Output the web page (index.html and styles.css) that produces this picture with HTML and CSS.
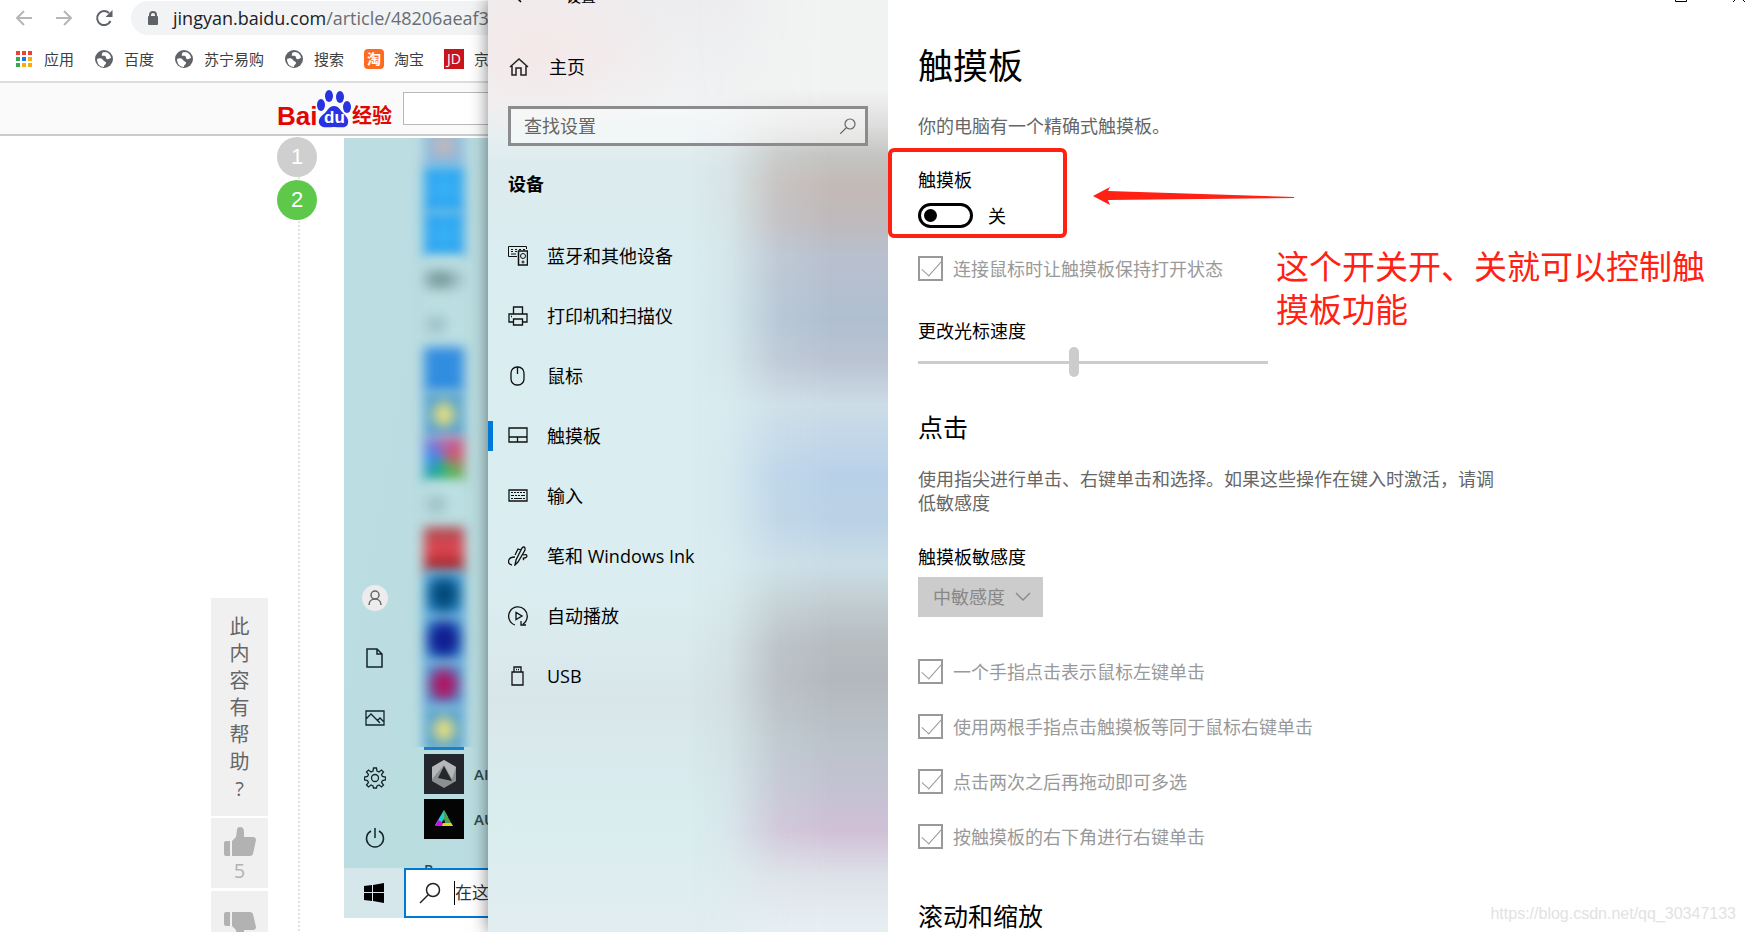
FILE: index.html
```html
<!DOCTYPE html>
<html lang="zh-CN">
<head>
    <meta charset="UTF-8">
    <title>触摸板</title>
    <link rel="stylesheet" href="styles.css">
</head>
<body>
  <div class="desktop">

    <div class="browser">
      <div class="toolbar">
        <button class="tool" aria-label="后退">
          <svg width="18" height="18" viewBox="0 0 18 18" fill="none" stroke="#b4b6b8" stroke-width="2"><path d="M17 9H2M9 2L2 9l7 7"/></svg>
        </button>
        <button class="tool" aria-label="前进">
          <svg width="18" height="18" viewBox="0 0 18 18" fill="none" stroke="#b4b6b8" stroke-width="2"><path d="M1 9h15M9 2l7 7-7 7"/></svg>
        </button>
        <button class="tool" aria-label="刷新">
          <svg width="18" height="18" viewBox="0 0 18 18"><path d="M15.500 12A7 7 0 1 1 14 4" fill="none" stroke="#5f6368" stroke-width="2"/><path d="M17.500 1v7h-7z" fill="#5f6368"/></svg>
        </button>
        <div class="address">
          <svg width="12" height="15" viewBox="0 0 12 15"><path d="M3 6V4a3 3 0 0 1 6 0v2" fill="none" stroke="#5f6368" stroke-width="2"/><rect x="1" y="5" width="10" height="9" rx="1" fill="#5f6368"/></svg>
          <p>jingyan.baidu.com<span>/article/48206aeaf3</span></p>
        </div>
      </div>

      <div class="bookmarks">
        <a href="#">
          <svg width="20" height="20" viewBox="0 0 20 20">
            <path fill="#ea4335" d="M2 2h4v4H2zM8 2h4v4H8zM14 2h4v4h-4z"/>
            <path fill="#34a853" d="M2 8h4v4H2zM2 14h4v4H2z"/>
            <path fill="#1a73e8" d="M8 8h4v4H8z"/>
            <path fill="#fbab09" d="M14 8h4v4h-4zM8 14h4v4H8zM14 14h4v4h-4z"/>
          </svg>应用</a>
        <a href="#"><svg width="20" height="20" viewBox="0 0 20 20"><use href="#globe"/></svg>百度</a>
        <a href="#"><svg width="20" height="20" viewBox="0 0 20 20"><use href="#globe"/></svg>苏宁易购</a>
        <a href="#"><svg width="20" height="20" viewBox="0 0 20 20"><use href="#globe"/></svg>搜索</a>
        <a href="#"><span class="mark taobao">淘</span>淘宝</a>
        <a href="#"><span class="mark jd">JD</span>京</a>
      </div>

      <div class="site-header">
        <a class="logo" href="#">
          <span class="logo-bai">Bai</span>
          <span class="paw">
            <svg width="36" height="38" viewBox="0 0 36 38" fill="#2932e1">
              <ellipse cx="5" cy="15" rx="4" ry="6"/><ellipse cx="13" cy="6" rx="4" ry="6"/>
              <ellipse cx="24" cy="7" rx="4" ry="6"/><ellipse cx="31" cy="17" rx="4" ry="6"/>
              <path d="M18 16c-5 0-6 4-9 7-4 3-7 6-6 10 2 6 9 4 15 4s13 2 14-4c1-4-2-7-5-10-3-3-4-7-9-7z"/>
            </svg>
            <span class="du">du</span>
          </span>
          <span class="logo-cn">经验</span>
        </a>
        <input class="site-search" type="text" aria-label="搜索经验">
      </div>

      <div class="article">
        <div class="helpful">
          <p class="helpful-title">此内容有帮助?</p>
          <button class="vote" aria-label="有帮助">
            <svg width="32" height="30" viewBox="0 0 32 30" fill="#b2b2b2"><path d="M0 16q0-2 2-2h4v15H2q-2 0-2-2zM8 14l4-4 1-7q0-3 3-3 4 0 4 5v5h9q3 0 3 3l-3 14q-1 2-3 2H8z"/></svg>
            5
          </button>
          <button class="vote down" aria-label="没帮助">
            <svg width="32" height="30" viewBox="0 0 32 30" fill="#b2b2b2"><path d="M0 13q0 2 2 2h4V1H2Q0 1 0 3zM8 15l4 4 1 7q0 3 3 3 4 0 4-5v-5h9q3 0 3-3L29 3q-1-2-3-2H8z"/></svg>
          </button>
        </div>

        <div class="steps">
          <span class="step">1</span>
          <span class="step current">2</span>
        </div>

        <div class="start-shot">
          <div class="start-menu">
            <div class="start-rail">
              <span class="avatar">
                <svg width="14" height="16" viewBox="0 0 14 16" fill="none" stroke="#666" stroke-width="1.500"><circle cx="7" cy="5" r="4"/><path d="M1 15c0-8 12-8 12 0"/></svg>
              </span>
              <svg width="20" height="22" viewBox="0 0 20 22" fill="none" stroke="#14252b" stroke-width="1.500"><path d="M2 2h10l5 5v13H2zM12 2v5h5"/></svg>
              <svg width="20" height="22" viewBox="0 0 20 22" fill="none" stroke="#14252b" stroke-width="1.300"><path d="M1 4h18v14H1zM1 12l5-5 9 9M12 14l3-3 4 4"/></svg>
              <svg width="22" height="22" viewBox="0 0 22 22" fill="none" stroke="#14252b" stroke-width="1.300"><circle cx="11" cy="11" r="3.500"/><path d="M9.500 1h3l.5 3 2 1 2.500-2 2 2-2 2.500 1 2 3 .5v3l-3 .5-1 2 2 2.500-2 2-2.500-2-2 1-.5 2h-3l-.5-2-2-1-2.500 2-2-2 2-2.500-1-2-3-.5v-3l3-.5 1-2-2-2.500 2-2 2.500 2 2-1z"/></svg>
              <svg width="20" height="22" viewBox="0 0 20 22" fill="none" stroke="#14252b" stroke-width="1.500"><path d="M6 4a8.500 8.500 0 1 0 8 0M10 1v10"/></svg>
            </div>
            <div class="apps">
              <div class="apps-blurred">
                <div class="app peach"></div>
                <div class="app sky"></div>
                <div class="app sky"></div>
                <div class="app label"></div>
                <div class="app letter"></div>
                <div class="app azure"></div>
                <div class="app gold"></div>
                <div class="app multi"></div>
                <div class="app letter"></div>
                <div class="app red"></div>
                <div class="app teal"></div>
                <div class="app navy"></div>
                <div class="app magenta"></div>
                <div class="app gold"></div>
              </div>
              <div class="apps-edge"></div>
              <div class="app-row">
                <svg width="40" height="40" viewBox="0 0 40 40"><rect width="40" height="40" fill="#23272d"/><path d="M20 6l12 7v14l-12 7-12-7V13z" fill="#8d9093"/><path d="M20 6l12 7-4 12-8-14-12 14V13z" fill="#b5b7b9"/><path d="M20 12l8 15-14-3z" fill="#24272c"/></svg>
                AI
              </div>
              <div class="app-row">
                <svg width="40" height="40" viewBox="0 0 40 40"><rect width="40" height="40" fill="#040404"/><path d="M20 11l4 7-4 2-4 6h-5z" fill="#22c7d8"/><path d="M20 11l9 16h-7l-2-7z" fill="#4da04e"/><path d="M14 21l4 2 2 4h-9z" fill="#c913e0"/><path d="M19 24h8l2 3H18z" fill="#e6d21b"/></svg>
                AU
              </div>
              <p class="apps-letter">B</p>
            </div>
          </div>
          <div class="taskbar">
            <span class="start-button">
              <svg width="20" height="20" viewBox="0 0 20 20"><path d="M0 3l8-1v7H0zM9 2l11-2v9H9zM0 10h8v8l-8-1zM9 10h11v10L9 18z"/></svg>
            </span>
            <div class="task-search">
              <svg width="22" height="22" viewBox="0 0 22 22" fill="none" stroke="#222" stroke-width="1.500"><circle cx="14" cy="8" r="6.500"/><path d="M9 13l-8 8"/></svg>
              <span>在这</span>
            </div>
          </div>
        </div>
      </div>
    </div>

    <div class="settings">
      <div class="nav">
        <div class="nav-caption">
          <svg width="14" height="14" viewBox="0 0 14 14" fill="none" stroke="#000" stroke-width="1.500"><path d="M13 7H1M7 1L1 7l6 6"/></svg>
          设置
        </div>
        <a class="nav-home" href="#">
          <svg width="20" height="20" viewBox="0 0 20 20" fill="none" stroke="#222" stroke-width="1.500"><path d="M1 10l9-8 9 8M3 9v9h4v-7h5v7h5V9"/></svg>
          主页
        </a>
        <div class="nav-search">
          <input type="text" placeholder="查找设置" aria-label="查找设置">
          <svg width="16" height="16" viewBox="0 0 16 16" fill="none" stroke="#666" stroke-width="1.200"><circle cx="10" cy="6" r="5"/><path d="M6 10l-6 6"/></svg>
        </div>
        <h2>设备</h2>
        <a class="nav-item" href="#">
          <svg width="20" height="20" viewBox="0 0 20 20" fill="none" stroke="#111"><path d="M9 10.500H.5V.5h18V3M3 3.500h2m2 0h2m2 0h2m2 0h2M3 5.500h2m2 0h2M3 8h5"/><path stroke-width="1.500" d="M10.500 5h9v14h-9z"/><circle cx="15" cy="10" r="2.500"/><circle cx="15" cy="16" r="1"/></svg>
          蓝牙和其他设备
        </a>
        <a class="nav-item" href="#">
          <svg width="20" height="20" viewBox="0 0 20 20" fill="none" stroke="#111" stroke-width="1.300"><path d="M5.500 8V1h9v7M5 16H1V8h18v8h-4M5.500 13h9v6h-9zM3 10.500h1"/></svg>
          打印机和扫描仪
        </a>
        <a class="nav-item" href="#">
          <svg width="20" height="20" viewBox="0 0 20 20" fill="none" stroke="#111" stroke-width="1.300"><rect x="3" y="1" width="13" height="18" rx="6"/><path d="M9.500 1v7"/></svg>
          鼠标
        </a>
        <a class="nav-item active" href="#">
          <svg width="20" height="20" viewBox="0 0 20 20" fill="none" stroke="#111" stroke-width="1.300"><path d="M1 2h18v14H1zM1 11h18M9.500 11v5"/></svg>
          触摸板
        </a>
        <a class="nav-item" href="#">
          <svg width="20" height="20" viewBox="0 0 20 20" fill="none" stroke="#111" stroke-width="1.300"><path d="M1 4h18v11H1z"/><path stroke-width="1" d="M3 6.500h2m1 0h2m1 0h2m1 0h2m1 0h2M3 9.500h3m1 0h2m1 0h2m1 0h4M3 12.500h2m1 0h8m1 0h2"/></svg>
          输入
        </a>
        <a class="nav-item" href="#">
          <svg width="20" height="20" viewBox="0 0 20 20" fill="none" stroke="#111" stroke-width="1.300"><path d="M7 19l1-5 6-12q2-2 3 0v2l-7 12zM13 4l-3-1-3 6M7 11c-8 0-8 7-3 8M15 9c5-2 5 3 1 3-1 0-1 1 0 2"/></svg>
          笔和 Windows Ink
        </a>
        <a class="nav-item" href="#">
          <svg width="20" height="20" viewBox="0 0 20 20" fill="none" stroke="#111" stroke-width="1.300"><path d="M7 19a9.300 9.300 0 1 1 8-1M13 15v4h5M8 6.500v7l6-3.500z"/></svg>
          自动播放
        </a>
        <a class="nav-item" href="#">
          <svg width="20" height="20" viewBox="0 0 20 20" fill="none" stroke="#111" stroke-width="1.300"><path d="M4 6h11v13H4zM6 6V1h7v5M8 3.500h1m1 0h1"/></svg>
          USB
        </a>
      </div>

      <div class="content">
        <div class="window-buttons">
          <svg width="12" height="12" viewBox="0 0 12 12" fill="none" stroke="#000"><path d="M.5.5h11v11H.5z"/></svg>
          <svg width="12" height="12" viewBox="0 0 12 12" fill="none" stroke="#000"><path d="M0 0l12 12M12 0L0 12"/></svg>
        </div>
        <h1>触摸板</h1>
        <p class="hint">你的电脑有一个精确式触摸板。</p>

        <div class="highlight">
          <label for="touchpad">触摸板</label>
          <div class="switch-row">
            <input class="switch" type="checkbox" id="touchpad">
            <span>关</span>
          </div>
        </div>

        <label class="check"><input type="checkbox" checked disabled>连接鼠标时让触摸板保持打开状态</label>

        <label class="field-label speed-label" for="speed">更改光标速度</label>
        <input class="slider" type="range" id="speed" min="0" max="9" value="4" disabled>

        <h3>点击</h3>
        <p class="hint tap-hint">使用指尖进行单击、右键单击和选择。如果这些操作在键入时激活，请调低敏感度</p>

        <label class="field-label" for="sensitivity">触摸板敏感度</label>
        <div class="select">
          <select id="sensitivity" disabled>
            <option>中敏感度</option>
          </select>
          <svg width="16" height="10" viewBox="0 0 16 10" fill="none" stroke="#888" stroke-width="1.300"><path d="M1 1l7 7 7-7"/></svg>
        </div>

        <div class="checks">
          <label class="check"><input type="checkbox" checked disabled>一个手指点击表示鼠标左键单击</label>
          <label class="check"><input type="checkbox" checked disabled>使用两根手指点击触摸板等同于鼠标右键单击</label>
          <label class="check"><input type="checkbox" checked disabled>点击两次之后再拖动即可多选</label>
          <label class="check"><input type="checkbox" checked disabled>按触摸板的右下角进行右键单击</label>
        </div>

        <h3>滚动和缩放</h3>

        <!-- notes drawn over the window -->
        <svg class="arrow" width="202" height="20" viewBox="0 0 202 20" fill="#ff2113"><path d="M0 10L17 1l-2 4 186 6v1L15 14l2 5z"/></svg>
        <p class="note">这个开关开、关就可以控制触摸板功能</p>
        <p class="watermark">https://blog.csdn.net/qq_30347133</p>
      </div>
    </div>
  </div>

  <svg width="0" height="0" class="defs">
    <defs>
      <g id="globe">
        <circle cx="10" cy="10" r="9" fill="#5f6368"/>
        <path fill="#fff" d="M3 10c2-1 5-1 6 1s3 1 3 3-2 1-2 4c-4 0-7-3-7-8zM11 3c3 0 6 3 6 6-2 0-2 2-4 1s0-2-2-3-4 1-3-2 1-1 3-2z"/>
      </g>
    </defs>
  </svg>
</body>
</html>
```
FILE: styles.css
```css
* {
  box-sizing: border-box;
}

body {
  margin: 0;
  background-color: #fff;
  color: #000;
  font-family: "Open Sans", "Noto Sans CJK SC", sans-serif;
  font-size: 18px;
  line-height: 24px;
}

p, h1, h2, h3 {
  margin: 0;
  font-weight: normal;
}

a {
  color: inherit;
  text-decoration: none;
}

button {
  border: 0;
  padding: 0;
  background: none;
  font: inherit;
}

svg {
  display: block;
  flex: none;
}

.defs {
  position: absolute;
}

.desktop {
  display: flex;
  height: 100vh;
  overflow: hidden;
}

/* browser behind the settings window */

.browser {
  width: 488px;
  flex: none;
  display: flex;
  flex-direction: column;
  overflow: hidden;
}

.toolbar {
  display: flex;
  align-items: center;
  height: 36px;
  padding-left: 15px;
  gap: 22px;
  flex: none;
}

.tool {
  width: 18px;
  height: 18px;
}

.address {
  flex: 1;
  display: flex;
  align-items: center;
  gap: 14px;
  height: 34px;
  margin-left: -4px;
  padding-left: 16px;
  border-radius: 17px 0 0 17px;
  background-color: #f1f3f4;
  color: #202124;
  white-space: nowrap;
  overflow: hidden;
}

.address span {
  color: #6a6e72;
}

.bookmarks {
  display: flex;
  align-items: center;
  gap: 20px;
  flex: none;
  height: 47px;
  padding-left: 14px;
  border-bottom: 2px solid #dadce0;
  color: #3c4043;
  font-size: 15px;
  white-space: nowrap;
}

.bookmarks a {
  display: flex;
  align-items: center;
  gap: 10px;
}

.mark {
  width: 20px;
  height: 20px;
  color: #fff;
  font-size: 14px;
  line-height: 19px;
  text-align: center;
}

.taobao {
  border-radius: 4px;
  background-color: #ff6a22;
  font-weight: bold;
}

.jd {
  background-color: #c9141e;
}

.site-header {
  display: flex;
  align-items: center;
  flex: none;
  height: 53px;
  padding-left: 277px;
  border-bottom: 2px solid #ccc;
  background-color: #fafafa;
}

.logo {
  display: flex;
  align-items: flex-end;
  width: 114px;
  height: 38px;
  margin-right: 12px;
  flex: none;
  color: #e10602;
  font-family: "Liberation Sans", "Noto Sans CJK SC", sans-serif;
  font-weight: bold;
  white-space: nowrap;
}

.logo-bai {
  width: 39px;
  font-size: 26px;
}

.logo-cn {
  font-size: 20px;
}

.paw {
  position: relative;
}

.du {
  position: absolute;
  left: 8px;
  bottom: 0;
  color: #fff;
  font-size: 17px;
  line-height: 20px;
}

.site-search {
  width: 300px;
  height: 33px;
  flex: none;
  border: 1px solid #b8b8b8;
  background-color: #fff;
}

.article {
  flex: 1;
  display: flex;
  align-items: flex-start;
  padding: 1px 0 0 211px;
  min-height: 0;
}

.helpful {
  width: 57px;
  flex: none;
  margin: 461px 9px 0 0;
  color: #666;
}

.helpful-title {
  height: 218px;
  padding: 15px 18px;
  background-color: #f0f0f0;
  font-size: 20px;
  line-height: 27px;
  line-break: anywhere;
  text-align: center;
}

.vote {
  display: flex;
  flex-direction: column;
  align-items: center;
  width: 57px;
  height: 70px;
  margin-top: 2px;
  padding-top: 9px;
  background-color: #f0f0f0;
  color: #b2b2b2;
  font-size: 20px;
  line-height: 28px;
}

.vote.down {
  margin-top: 3px;
  padding-top: 20px;
}

.steps {
  display: flex;
  flex-direction: column;
  align-items: center;
  gap: 3px;
  width: 40px;
  height: 795px;
  margin-right: 27px;
  flex: none;
  background: repeating-linear-gradient(#e2e2e2 0 2px, #fff 2px 4px) 21px 0 / 2px 100% no-repeat;
}

.step {
  width: 40px;
  height: 40px;
  border-radius: 50%;
  background-color: #cfcfcf;
  color: #fff;
  font-family: "Liberation Sans", sans-serif;
  font-size: 22px;
  line-height: 40px;
  text-align: center;
}

.step.current {
  background-color: #5dc84a;
}

.start-shot {
  flex: 1;
  min-width: 0;
  margin-top: 1px;
  overflow: hidden;
  background: linear-gradient(100deg, #bddde2, #b9dde0);
}

.start-menu {
  display: flex;
  height: 730px;
}

.start-rail {
  display: flex;
  flex-direction: column;
  align-items: center;
  gap: 38px;
  width: 62px;
  padding-top: 449px;
  flex: none;
}

.avatar {
  display: grid;
  place-items: center;
  width: 26px;
  height: 26px;
  margin: -2px 0;
  border-radius: 50%;
  background-color: #ececec;
}

.apps {
  width: 82px;
  flex: none;
  overflow: hidden;
}

.apps-blurred {
  height: 609px;
  padding-left: 18px;
  overflow: hidden;
}

.app {
  width: 40px;
  height: 45px;
  filter: blur(6px);
  background-color: #48a0dc;
  box-shadow: 68px 0 0 -14px #849da0;
}

.app:first-child {
  margin-top: -16px;
}

.peach {
  background: radial-gradient(#d2b8b0, #8cb8dc 60%);
}

.sky {
  background: radial-gradient(#3eb5f8, #1f9aec);
}

.label {
  background: radial-gradient(30px 14px at 40% 50%, #5f8386, #bcdfe2);
  box-shadow: none;
}

.letter {
  background: radial-gradient(16px 14px at 30% 50%, #8fb4ba, #bcdfe2);
  box-shadow: none;
}

.azure {
  background: #318de0;
}

.gold {
  background: radial-gradient(#ece07a 20%, #4f9fd2 55%);
}

.multi {
  background: conic-gradient(#b266a8, #d6506a, #5cba50, #1fa8a0, #3f88f8, #b266a8);
}

.red {
  background: linear-gradient(#a84850, #e24650, #8e2028);
}

.teal {
  background: radial-gradient(#004878 30%, #3d98d8 75%);
}

.navy {
  background: radial-gradient(#101c90 35%, #3d98d8 80%);
}

.magenta {
  background: radial-gradient(#b01460 30%, #4a92d4 65%);
}

.apps-edge {
  width: 40px;
  height: 3px;
  margin: 0 0 4px 18px;
  background-color: #1c80c8;
}

.app-row {
  display: flex;
  align-items: center;
  gap: 10px;
  height: 40px;
  margin: 0 0 5px 18px;
  color: #33484e;
  font-size: 15px;
  font-weight: 600;
}

.apps-letter {
  padding: 14px 0 0 18px;
  color: #33484e;
  font-size: 14px;
  font-weight: 600;
}

.taskbar {
  position: relative;
  display: flex;
  height: 50px;
  background-color: #d6e7eb;
}

.start-button {
  display: grid;
  place-items: center;
  width: 60px;
  flex: none;
}

.task-search {
  display: flex;
  align-items: center;
  gap: 13px;
  width: 200px;
  flex: none;
  padding-left: 13px;
  border: 2px solid #0078d7;
  background-color: #fff;
  color: #333;
  font-size: 17px;
}

.task-search span {
  border-left: 1px solid #000;
}

/* settings window */

.settings {
  position: relative;
  flex: 1;
  display: flex;
  min-width: 0;
  background-color: #fff;
  box-shadow: 0 0 16px rgba(0, 0, 0, 0.5);
}

.nav {
  position: relative;
  z-index: 0;
  width: 400px;
  flex: none;
  background:
    radial-gradient(150px 90px at 50px 50px, rgba(245, 230, 230, 0.8), rgba(245, 230, 230, 0)),
    linear-gradient(#ededef 0, #f1f2f3 100px, #dcebee 170px, #daedf0 250px, #dbedf0 600px, #d8e6ea 700px, #d9edef 820px, #e2edf1);
}

/* blurred windows showing through the right side of the pane */
.nav::before {
  content: "";
  position: absolute;
  inset: 0;
  z-index: -1;
  background: linear-gradient(#f1f2f2 90px, #dededd 125px, #c4c4c2 155px, #c3bab7 185px, #bfb9bc 220px, #b9c0ce 255px, #b0bfd0 320px, #bac3d2 360px, #cddce6 405px, #c5d8e8 430px, #b9d1e8 475px, #bbd2e6 520px, #cadde6 565px, #c0cace 610px, #b6bcc0 645px, #b4b8be 680px, #bac3ca 740px, #c4c2d2 790px, #d0c0d6 830px, #dde0e8 875px, #e6eef2 925px);
  mask-image: linear-gradient(to right, transparent 200px, rgba(0, 0, 0, 0.15) 240px, rgba(0, 0, 0, 0.8) 290px, #000 340px);
}

.nav-caption {
  display: flex;
  align-items: center;
  gap: 38px;
  height: 24px;
  margin-top: -16px;
  padding-left: 26px;
  font-size: 15px;
}

.nav-home {
  display: flex;
  align-items: center;
  gap: 20px;
  margin: 47px 0 27px;
  padding-left: 21px;
}

.nav-search {
  display: flex;
  align-items: center;
  height: 40px;
  margin: 0 20px;
  padding: 0 9px 0 13px;
  border: 3px solid #8c8c8e;
  background-color: rgba(255, 255, 255, 0.45);
}

.nav-search input {
  flex: 1;
  min-width: 0;
  padding: 0;
  border: 0;
  background: none;
  font: inherit;
}

.nav-search input::placeholder {
  color: #666;
}

.nav h2 {
  margin: 26px 0 30px;
  padding-left: 20px;
  font-size: 18px;
  font-weight: bold;
}

.nav-item {
  display: flex;
  align-items: center;
  gap: 19px;
  height: 60px;
  padding-left: 20px;
}

.active {
  background: linear-gradient(#0078d7, #0078d7) 0 50% / 5px 30px no-repeat;
}

.content {
  position: relative;
  flex: 1;
  min-width: 0;
  padding-left: 30px;
}

.window-buttons {
  display: flex;
  justify-content: flex-end;
  gap: 46px;
  height: 12px;
  margin-top: -10px;
}

.content h1 {
  margin: 40px 0 24px;
  font-size: 35px;
  line-height: 48px;
}

.hint {
  max-width: 580px;
  color: #666;
}

.highlight {
  width: 179px;
  height: 90px;
  margin: 10px 0 18px -30px;
  padding: 16px 26px 0;
  border: 4px solid #ff2113;
  border-radius: 6px;
}

.highlight label {
  display: block;
}

.switch-row {
  display: flex;
  align-items: center;
  gap: 15px;
  margin-top: 11px;
}

.switch {
  appearance: none;
  display: flex;
  align-items: center;
  width: 55px;
  height: 25px;
  margin: 0;
  padding-left: 3px;
  border: 3px solid #000;
  border-radius: 13px;
}

.switch::before {
  content: "";
  width: 13px;
  height: 13px;
  border-radius: 50%;
  background-color: #000;
}

.check {
  display: flex;
  align-items: center;
  gap: 10px;
  height: 25px;
  color: #999;
}

.check input {
  appearance: none;
  width: 25px;
  height: 25px;
  margin: 0;
  border: 2px solid #999;
  flex: none;
}

.check input::before {
  content: "";
  display: block;
  width: 18px;
  height: 9px;
  margin: 3px 0 0 2px;
  border-left: 1px solid #999;
  border-bottom: 1px solid #999;
  transform: rotate(-48deg);
}

.field-label {
  display: block;
}

.speed-label {
  margin-top: 38px;
}

.slider {
  appearance: none;
  display: block;
  width: 350px;
  height: 30px;
  margin: 4px 0 35px;
  background: linear-gradient(#ccc, #ccc) 0 50% / 100% 3px no-repeat;
}

.slider::-webkit-slider-thumb {
  appearance: none;
  width: 10px;
  height: 30px;
  border-radius: 5px;
  background-color: #ccc;
}

.content h3 {
  font-size: 25px;
  line-height: 30px;
}

.tap-hint {
  margin: 25px 0 30px;
}

.select {
  display: flex;
  align-items: center;
  width: 125px;
  height: 40px;
  margin: 8px 0 42px;
  padding: 0 12px 0 15px;
  background-color: #ccc;
}

.select select {
  appearance: none;
  flex: 1;
  min-width: 0;
  padding: 0;
  border: 0;
  background: none;
  color: #888;
  font: inherit;
  opacity: 1;
}

.checks {
  display: flex;
  flex-direction: column;
  gap: 30px;
  margin-bottom: 52px;
}

.arrow {
  position: absolute;
  left: 205px;
  top: 186px;
}

.note {
  position: absolute;
  left: 388px;
  top: 245px;
  width: 440px;
  color: #ff2113;
  font-size: 33px;
  line-height: 43px;
}

.watermark {
  position: absolute;
  right: 9px;
  bottom: 6px;
  color: #e2e2e2;
  font-family: "Liberation Sans", sans-serif;
  font-size: 16px;
}
```
